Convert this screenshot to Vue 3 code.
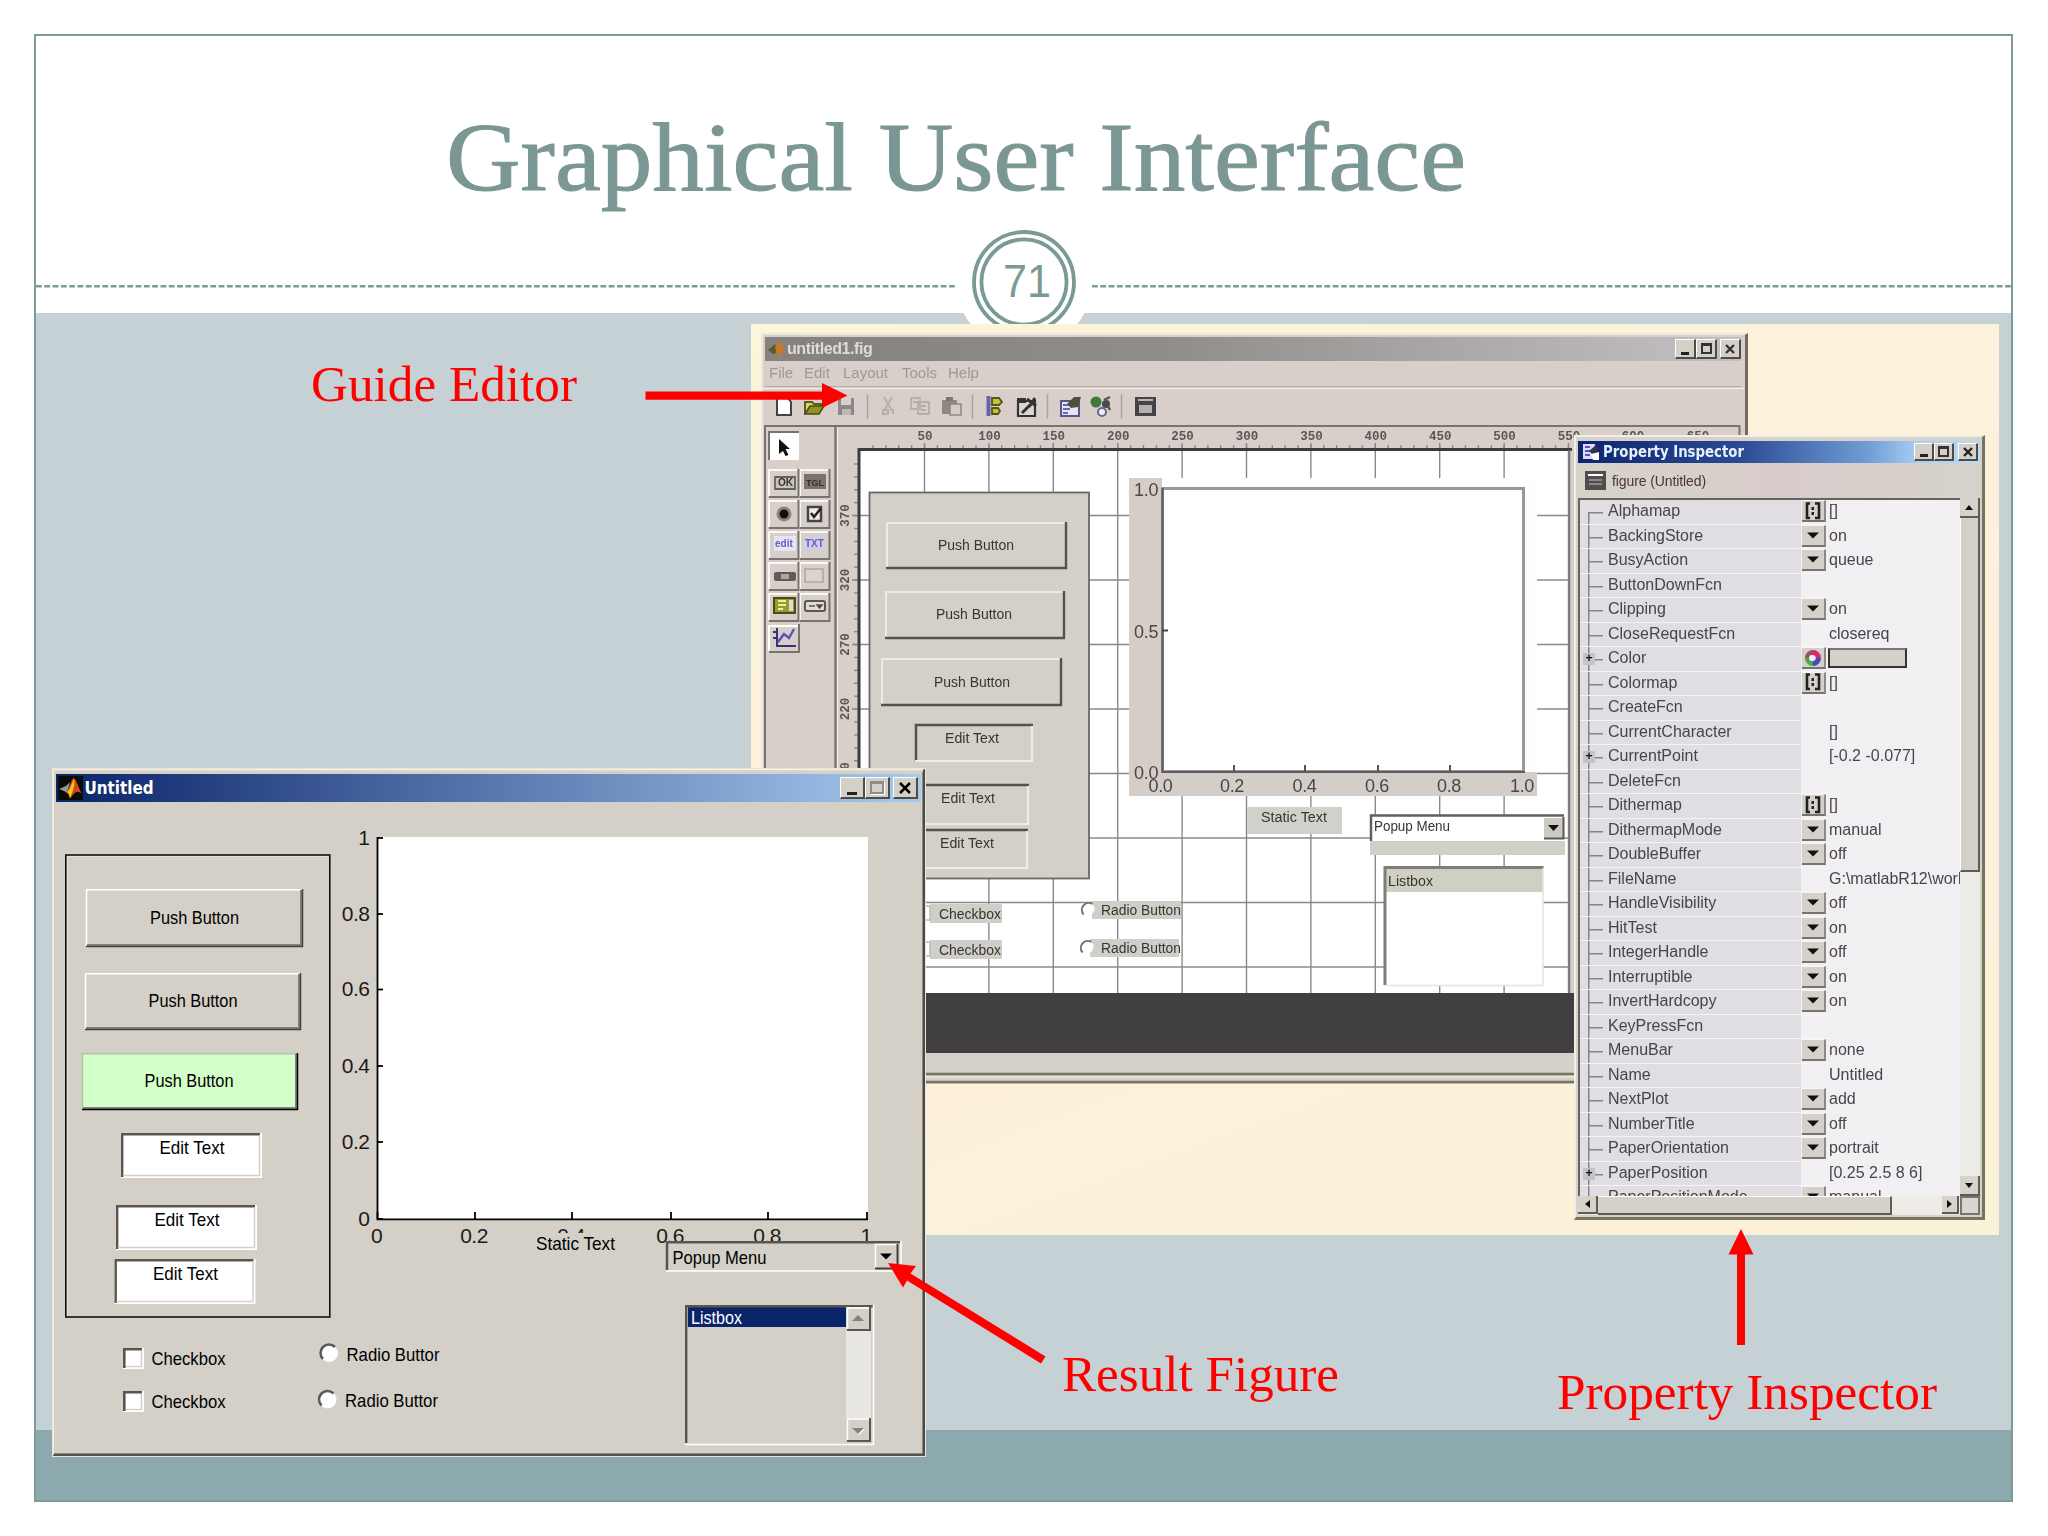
<script setup>
const menus = [
  { t: 'File', w: 35 }, { t: 'Edit', w: 39 }, { t: 'Layout', w: 59 }, { t: 'Tools', w: 46 }, { t: 'Help', w: 40 },
]

const rows = [
  ['Alphamap', 'm', '[]'], ['BackingStore', 'd', 'on'], ['BusyAction', 'd', 'queue'], ['ButtonDownFcn', '', ''],
  ['Clipping', 'd', 'on'], ['CloseRequestFcn', '', 'closereq'], ['Color', 'c', ''], ['Colormap', 'm', '[]'],
  ['CreateFcn', '', ''], ['CurrentCharacter', '', '[]'], ['CurrentPoint', '', '[-0.2 -0.077]'], ['DeleteFcn', '', ''],
  ['Dithermap', 'm', '[]'], ['DithermapMode', 'd', 'manual'], ['DoubleBuffer', 'd', 'off'],
  ['FileName', '', 'G:\\matlabR12\\work'], ['HandleVisibility', 'd', 'off'], ['HitTest', 'd', 'on'],
  ['IntegerHandle', 'd', 'off'], ['Interruptible', 'd', 'on'], ['InvertHardcopy', 'd', 'on'], ['KeyPressFcn', '', ''],
  ['MenuBar', 'd', 'none'], ['Name', '', 'Untitled'], ['NextPlot', 'd', 'add'], ['NumberTitle', 'd', 'off'],
  ['PaperOrientation', 'd', 'portrait'], ['PaperPosition', '', '[0.25 2.5 8 6]'], ['PaperPositionMode', 'd', 'manual'],
].map(([name, kind, value]) => ({ name, kind, value, plus: ['Color', 'CurrentPoint', 'PaperPosition'].includes(name) }))

/* layout editor, in slide coordinates */
const gridX = Array.from({ length: 11 }, (_, i) => ({ x: 924.5 + i * 64.4, label: 50 * (i + 1) }))
const gridY = ['370', '320', '270', '220', '170', '120', '70', '20'].map((label, i) => ({ y: 515.5 + i * 64.5, label }))
const ticksX = Array.from({ length: 55 }, (_, i) => 873 + i * 12.88)
const ticksY = Array.from({ length: 42 }, (_, i) => 464 + i * 12.9)
const guideButtons = [
  { x: 886, y: 522, w: 181, h: 47, tx: 938, ty: 549.5 },
  { x: 885, y: 591, w: 180, h: 48, tx: 936, ty: 619 },
  { x: 881, y: 658, w: 181, h: 48, tx: 934, ty: 687 },
]
const guideEdits = [
  { x: 915, y: 724, w: 118, h: 38, tx: 945, ty: 742.5 },
  { x: 911, y: 784, w: 118, h: 41, tx: 941, ty: 803 },
  { x: 910, y: 829, w: 118, h: 40, tx: 940, ty: 848 },
]
const guideTicks = [1160.5, 1232, 1304.5, 1377, 1449, 1522].map((x, i) => ({ x, label: (i * 0.2).toFixed(1) }))

/* running figure */
const figButtons = [
  { x: 86, y: 889, w: 217, h: 58, tx: 150, ty: 923.5, fill: '#d4d0c8' },
  { x: 85, y: 973, w: 216, h: 57, tx: 148.5, ty: 1007, fill: '#d4d0c8' },
  { x: 82, y: 1053, w: 216, h: 57, tx: 144.5, ty: 1087, fill: '#d3ffc8' },
]
const figEdits = [
  { x: 121, y: 1133, tx: 159.5, ty: 1153.5 },
  { x: 116, y: 1205, tx: 154.5, ty: 1226 },
  { x: 114.5, y: 1259, tx: 153, ty: 1280 },
]
const yAxis = [[838, '1'], [914, '0.8'], [989.5, '0.6'], [1066, '0.4'], [1142, '0.2'], [1219, '0']]
const xAxis = [[377.5, '0'], [475, '0.2'], [572, '0.4'], [671, '0.6'], [768, '0.8'], [867, '1']]
</script>

<template>
  <main class="slide">
    <section class="frame">
      <header class="head"></header>
      <div class="body"></div>
      <div class="foot"></div>
    </section>

    <svg class="layer" viewBox="0 0 2048 1536">
      <circle cx="1024" cy="282" r="68" fill="#fff" />
      <path d="M36 286.3H957M1092 286.3H2012" stroke="#7b9a95" stroke-width="2.4" stroke-dasharray="5.8 2.5" />
      <g fill="none" stroke="#7b9a95" stroke-width="3.8">
        <circle cx="1024" cy="282" r="50" /><circle cx="1024" cy="282" r="42.6" />
      </g>
      <text x="1003" y="297" class="num" textLength="48" lengthAdjust="spacingAndGlyphs">71</text>
      <text x="446" y="189.500" class="title" textLength="1020" lengthAdjust="spacingAndGlyphs">Graphical User Interface</text>
    </svg>

    <section class="backdrop">
      <section class="guide">
        <div class="g-title">
          <svg width="20" height="20" viewBox="0 0 20 20"><path d="M1 11L8 5L11 13L6 15Z" fill="#555c2c" /><path d="M8 8L13 1L19 16L15 13L11 19Z" fill="#c97828" /></svg>
          <span>untitled1.fig</span>
          <div class="ctl gctl"><i><b class="min"></b></i><i><b class="max"></b></i><i class="cl">
            <svg width="12" height="12"><path d="M2 2L10 10M10 2L2 10" stroke="#333" stroke-width="2.4" /></svg></i></div>
        </div>
        <nav class="g-menu"><span v-for="m in menus" :key="m.t" :style="{ width: m.w + 'px' }">{{ m.t }}</span></nav>
      </section>

      <svg class="canvas" viewBox="751 388 1000 696">
        <!-- toolbar -->
        <path d="M762 388.5H1744" stroke="#f5efe6" />
        <path d="M867.5 394V419M972.5 394V419M1047.500 394V419M1121.500 394V419" stroke="#aaa49d" stroke-width="1.5" />
        <path d="M777 397H787L791 402V415H777Z" fill="#fff" stroke="#444" stroke-width="2" />
        <path d="M805 414V402H812L814 404H821V407" fill="#d8d46a" stroke="#5b5b20" stroke-width="2" /><path d="M805 414L810 406H824L819 414Z" fill="#8f9428" stroke="#4a4a12" stroke-width="1.500" />
        <path d="M838 398H854V415H838Z" fill="#8c8789" /><path d="M841 398H851V405H841Z" fill="#d7d0cc" /><path d="M842 409H851V415H842Z" fill="#bdb7b5" />
        <path d="M884 397L891 409M892 397L885 409M883 410H888V414H883ZM890 410H893V414" fill="none" stroke="#b5aeab" stroke-width="2" />
        <path d="M911 398H920V409H911ZM918 402H929V414H918ZM913 402H918M921 406H926M921 410H926" fill="none" stroke="#b5aeab" stroke-width="1.800" />
        <path d="M942 400H957V414H942Z" fill="#8e8783" /><path d="M950 404H961V415H950Z" fill="#d4cdc6" stroke="#8e8783" stroke-width="1.500" /><path d="M946 397H953V401H946Z" fill="#777" />
        <path d="M988.5 396V416" stroke="#6860a8" stroke-width="4" /><path d="M992 398H999L1002 402L999 405H992ZM992 408H998L1000 411L998 414H992Z" fill="#c3c33a" stroke="#555518" stroke-width="1.8" />
        <path d="M1018 401H1035V416H1018Z" fill="#dcd6d0" stroke="#333" stroke-width="2.2" /><path d="M1017 398H1026V403H1017Z" fill="#333" /><path d="M1022 413L1030 405M1027 399L1036 406M1035 398L1029 407" stroke="#333" stroke-width="3" />
        <path d="M1061 401H1079V416H1061Z" fill="#e9e4f5" stroke="#5a548c" stroke-width="2" /><path d="M1063 405H1070M1063 409H1070M1063 413H1068" stroke="#6d65b5" stroke-width="2" /><path d="M1067 404L1074 397L1081 397L1078 407L1071 408Z" fill="#504f3c" />
        <circle cx="1096" cy="402" r="5.500" fill="#3f7a3c" /><circle cx="1106" cy="404" r="4" fill="#4a4850" /><circle cx="1102" cy="412" r="4" fill="#f0eef5" stroke="#6a648c" stroke-width="2" /><path d="M1104 400L1110 397M1108 406L1110 410" stroke="#555" stroke-width="2.500" />
        <path d="M1135 397H1156V416H1135Z" fill="#444" /><path d="M1138 400H1153" stroke="#ddd" stroke-width="1.5" /><path d="M1139 405H1152V413H1139Z" fill="#b4afac" />

        <!-- palette -->
        <path d="M765 1053V426H1740" fill="none" stroke="#77736d" stroke-width="2" />
        <path d="M835.5 426V1053" stroke="#77736d" stroke-width="2.4" /><path d="M837.5 427V1053" stroke="#f4f0ea" />
        <rect x="769" y="432" width="30" height="28" fill="#fff" /><path d="M769 460V432H799" fill="none" stroke="#77736d" stroke-width="2" />
        <path d="M779 439L790 449L785.500 449L788.500 455L785.500 456L783 451L779 454Z" fill="#111" />
        <g v-for="r in 5" :key="r" :transform="`translate(0 ${469 + (r - 1) * 31})`">
          <path v-for="c in 2" :key="c" :d="`M${738 + c * 31} 27V1H${766 + c * 31}`" fill="none" stroke="#faf8f4" stroke-width="2" />
          <path v-for="c in 2" :key="c + 5" :d="`M${738 + c * 31} 28H${767.5 + c * 31}V0`" fill="none" stroke="#77736d" stroke-width="2" />
        </g>
        <path d="M769 651V626H798" fill="none" stroke="#fff" stroke-width="2" /><path d="M769 652H799V624" fill="none" stroke="#77736d" stroke-width="2" />
        <path d="M775 477H795V489H775Z" fill="#c9c4bb" stroke="#66625c" stroke-width="1.8" /><text x="778" y="486" font-size="8" class="b">OK</text>
        <path d="M804 474H826V489H804Z" fill="#77736d" /><text x="806" y="486" font-size="10" class="b dark">TGL</text>
        <circle cx="784" cy="514" r="7.500" fill="#8a867f" /><circle cx="784" cy="514" r="4.500" fill="#111" />
        <path d="M808 507H821V521H808Z" fill="#eee" stroke="#444" stroke-width="2.500" /><path d="M811 513L814 517L821 508" fill="none" stroke="#222" stroke-width="2.500" />
        <path d="M774 536H796V551H774Z" fill="#e6e4fb" /><text x="775" y="547" class="b blue">edit</text>
        <path d="M804 537H825V550H804Z" fill="#cfcdeb" /><text x="805" y="547" class="b blue">TXT</text>
        <rect x="774" y="572" width="22" height="9" rx="2" fill="#5f5b57" /><rect x="781" y="574" width="8" height="5" fill="#aaa" />
        <rect x="805" y="569" width="18" height="13" fill="#d9d5ce" stroke="#aaa6a0" stroke-width="1.500" />
        <path d="M774 598H795V613H774Z" fill="#9a9c2e" stroke="#4b4b20" stroke-width="2" /><path d="M778 601H786M778 605H786M778 609H783" stroke="#eef09a" stroke-width="2" /><path d="M789 600H793V611H789Z" fill="#ddd" />
        <rect x="805" y="601" width="20" height="10" rx="2" fill="#e0dcd5" stroke="#5a5650" stroke-width="2" /><path d="M809 606H815M817 605H822L819.500 608Z" stroke="#555" stroke-width="1.500" />
        <path d="M777 628V646H796M773 632H777M773 638H777" fill="none" stroke="#333470" stroke-width="2" /><path d="M778 642L784 634L789 638L794 629" fill="none" stroke="#5552b8" stroke-width="2.400" />

        <!-- rulers and grid -->
        <rect x="859" y="450" width="712" height="543" fill="#fff" />
        <g stroke="#8a888c" stroke-width="1.400">
          <path v-for="g in gridX" :key="g.x" :d="`M${g.x} 443V993`" />
          <path v-for="g in gridY" :key="g.y" :d="`M852 ${g.y}H1570`" />
          <path v-for="t in ticksX" :key="t" :d="`M${t} 445V449`" />
          <path v-for="t in ticksY" :key="t" :d="`M854 ${t}H858`" />
        </g>
        <path d="M859 993V449.500H1572" fill="none" stroke="#3c3a3a" stroke-width="3" />
        <text v-for="g in gridX" :key="g.label" :x="g.x + 0.500" y="440" class="ruler" text-anchor="middle">{{ g.label }}</text>
        <text x="1633" y="440" class="ruler" text-anchor="middle">600</text><text x="1698" y="440" class="ruler" text-anchor="middle">650</text>
        <text v-for="g in gridY" :key="g.label" :transform="`translate(849 ${g.y}) rotate(-90)`" class="ruler" text-anchor="middle">{{ g.label }}</text>
        <path d="M1739.500 426V440" stroke="#77736d" stroke-width="2" />

        <!-- frame widget -->
        <rect x="869.5" y="492.500" width="219.500" height="386" fill="#d4d0c8" stroke="#6a6764" stroke-width="1.800" />
        <g v-for="b in guideButtons" :key="b.y">
          <path :d="`M${b.x + 1} ${b.y + b.h}V${b.y + 1}H${b.x + b.w}`" fill="none" stroke="#eeebe4" stroke-width="2" />
          <path :d="`M${b.x} ${b.y + b.h - 1}H${b.x + b.w - 1}V${b.y}`" fill="none" stroke="#55514e" stroke-width="2.400" />
          <text :x="b.tx" :y="b.ty" class="soft" textLength="76" lengthAdjust="spacingAndGlyphs">Push Button</text>
        </g>
        <g v-for="b in guideEdits" :key="b.y">
          <path :d="`M${b.x + 1} ${b.y + b.h}V${b.y + 1}H${b.x + b.w}`" fill="none" stroke="#55514d" stroke-width="2.500" />
          <path :d="`M${b.x} ${b.y + b.h - 1}H${b.x + b.w - 1}V${b.y + 2}`" fill="none" stroke="#efece6" stroke-width="2.200" />
          <text :x="b.tx" :y="b.ty" class="soft" textLength="54" lengthAdjust="spacingAndGlyphs">Edit Text</text>
        </g>

        <!-- axes widget -->
        <rect x="1129" y="478" width="408" height="318" fill="#fefefe" />
        <path d="M1129 478H1162V772H1537V796H1129Z" fill="#d5cec8" />
        <path d="M1162.500 488.500H1523.500V771.500H1162.500Z" fill="#fff" stroke="#9a9897" stroke-width="3" />
        <path d="M1162.500 488V772H1525" fill="none" stroke="#605d5c" stroke-width="2.200" />
        <path d="M1162 630.500H1168M1234 771V765M1305 771V765M1378 771V765M1450 771V765" stroke="#444" stroke-width="1.800" />
        <g class="axis">
          <text v-for="t in guideTicks" :key="t.x" :x="t.x" y="792" text-anchor="middle">{{ t.label }}</text>
          <text x="1134" y="779">0.0</text><text x="1134" y="638">0.5</text><text x="1134" y="495.500">1.0</text>
        </g>

        <rect x="1247" y="807" width="95" height="27" fill="#d0d1ca" />
        <text x="1261" y="822" class="soft" textLength="66" lengthAdjust="spacingAndGlyphs">Static Text</text>
        <rect x="1370" y="841" width="195" height="14" fill="#d0cfc8" />
        <rect x="1370" y="815" width="194" height="26" fill="#fff" /><path d="M1371 841V815.500H1564" fill="none" stroke="#625f5d" stroke-width="2.500" />
        <rect x="1544" y="818" width="20" height="21" fill="#ccc9c2" /><path d="M1544 838.500H1563.500V817" fill="none" stroke="#5a5754" stroke-width="2" />
        <path d="M1548 825H1559L1553.500 831Z" fill="#111" />
        <text x="1374" y="831" class="soft" textLength="76" lengthAdjust="spacingAndGlyphs">Popup Menu</text>
        <rect x="1384" y="866" width="159" height="120" fill="#fff" /><rect x="1386" y="869" width="157" height="23" fill="#d0cfc5" />
        <path d="M1385 985V867.500H1543.500" fill="none" stroke="#7f7c79" stroke-width="3" /><path d="M1386 985.500H1543V868" fill="none" stroke="#e6e4e2" stroke-width="1.500" />
        <text x="1388" y="886" class="soft" textLength="45" lengthAdjust="spacingAndGlyphs">Listbox</text>

        <g v-for="(y, i) in [904, 940]" :key="y">
          <rect x="930" :y="y" width="72" height="19" fill="#d0cec9" /><rect x="916" :y="y + 2" width="14" height="14" fill="#fff" stroke="#bbb" stroke-width="1.500" />
          <text x="939" :y="y + 15" class="soft" textLength="62" lengthAdjust="spacingAndGlyphs">Checkbox</text>
          <rect :x="1092 - i * 2" :y="y - 3 + i * 2" width="89" height="18" fill="#d0cec9" />
          <circle :cx="1088 - i" :cy="y + 5 + i * 2" r="6.500" fill="#fff" />
          <path :d="`M${1083.5 - i} ${y + 10.5 + i * 2}A7 7 0 0 1 ${1092.5 - i} ${y + i * 2}`" fill="none" stroke="#75726f" stroke-width="2" />
          <text x="1101" :y="y + 11 + i * 2" class="soft" textLength="80" lengthAdjust="spacingAndGlyphs">Radio Button</text>
        </g>
        <path d="M1569.500 450V993" stroke="#77757a" stroke-width="2" />

        <rect x="860" y="993" width="716" height="60" fill="#423f41" />
        <path d="M762 1053H1746V1084H762Z" fill="#d4d1ca" />
        <path d="M765 1074H1744M762 1082H1748" stroke="#77745f" stroke-width="2.600" /><path d="M765 1077H1744" stroke="#e6e3d6" stroke-width="2" />
      </svg>

      <section class="inspector">
        <div class="i-title">
          <svg width="18" height="18"><path d="M1 1H13V16H1Z" fill="#dcd9fa" /><path d="M3 4H8M3 8H8M3 12H8" stroke="#5a50c0" stroke-width="2" /><path d="M7 8L14 2L17 6L11 12Z" fill="#33314f" /><path d="M9 11L17 9V17H11Z" fill="#fff" /></svg>
          <svg class="cap" width="146" height="22"><text x="3" y="16" textLength="141" lengthAdjust="spacingAndGlyphs">Property Inspector</text></svg>
          <div class="ctl ictl"><i><b class="min"></b></i><i><b class="max"></b></i><i class="cl">
            <svg width="12" height="12"><path d="M2 2L10 10M10 2L2 10" stroke="#222" stroke-width="2.400" /></svg></i></div>
        </div>
        <div class="i-obj">
          <svg width="21" height="19"><path d="M0 0H21V19H0Z" fill="#504e4d" /><path d="M3 4H18" stroke="#fff" stroke-width="2" /><path d="M4 9H17M4 13H17" stroke="#8b8886" stroke-width="2" /></svg>
          <span>figure (Untitled)</span>
        </div>
        <div class="i-main">
          <div class="i-list">
            <div v-for="r in rows" :key="r.name" class="row">
              <div class="tree"><em v-if="r.plus">+</em></div>
              <div class="name">{{ r.name }}</div>
              <div class="btn">
                <i v-if="r.kind" :class="r.kind">
                  <svg v-if="r.kind === 'd'" width="12" height="7"><path d="M0 0.500H12L6 6.500Z" fill="#111" /></svg>
                  <svg v-else-if="r.kind === 'm'" width="18" height="18"><path d="M6 1.500H3V16H6M11 1.500H15V16H11" fill="none" stroke="#222" stroke-width="2.600" /><path d="M7.500 5H10V8H7.500ZM7.500 10H10V13H7.500Z" fill="#222" /></svg>
                  <svg v-else width="18" height="18"><g fill="none" stroke-width="5"><path d="M3.500 9A5.500 5.500 0 0 1 9 3.500" stroke="#a04a70" /><path d="M9 3.500A5.500 5.500 0 0 1 14.500 9" stroke="#d8286c" /><path d="M14.500 9A5.500 5.500 0 0 1 9 14.500" stroke="#3a50b8" /><path d="M9 14.500A5.500 5.500 0 0 1 3.500 9" stroke="#4aa848" /></g><circle cx="8" cy="9" r="3" fill="#eef" /></svg>
                </i>
              </div>
              <div class="val"><u v-if="r.kind === 'c'"></u><template v-else>{{ r.value }}</template></div>
            </div>
          </div>
          <div class="vbar">
            <i class="sb"><svg width="8" height="5"><path d="M0 5H8L4 0Z" fill="#111" /></svg></i>
            <i class="thumb"></i><span></span>
            <i class="sb"><svg width="8" height="5"><path d="M0 0H8L4 5Z" fill="#111" /></svg></i>
          </div>
        </div>
        <div class="hbar">
          <i class="sb"><svg width="5" height="8"><path d="M5 0V8L0 4Z" fill="#111" /></svg></i>
          <i class="hthumb"></i><span></span>
          <i class="sb r"><svg width="5" height="8"><path d="M0 0V8L5 4Z" fill="#111" /></svg></i><i class="corner"></i>
        </div>
      </section>
    </section>

    <section class="figure">
      <div class="f-title">
        <svg class="logo" width="25" height="24" viewBox="0 0 25 24"><path d="M0 0H25V24H0Z" fill="#0a0a08" /><path d="M1 13L8 10L12 6L9 17L6 15Z" fill="#8c9c98" /><path d="M8 16C12 12 13 3 16 2C19 5 21 13 24 18C20 14 17 15 12 23C11 18 10 18 8 16Z" fill="#cf4a12" /><path d="M16 3C17 8 16 13 12 22C11 19 11 17 9 16C13 13 14 6 16 3Z" fill="#f2c52c" /></svg>
        <svg width="74" height="26"><text x="1.500" y="19" class="ftxt" textLength="69" lengthAdjust="spacingAndGlyphs">Untitled</text></svg>
        <div class="ctl fctl"><i><b class="min"></b></i><i><b class="max off"></b></i><i class="cl">
          <svg width="14" height="12"><path d="M2 1L12 11M12 1L2 11" stroke="#000" stroke-width="2.500" /></svg></i></div>
      </div>
      <svg class="f-body" viewBox="56 802 866 652">
        <rect x="65.800" y="855" width="264" height="462" fill="none" stroke="#14120f" stroke-width="1.600" />
        <path d="M67.500 1316V856.500H329" fill="none" stroke="#e4e1da" />
        <g v-for="b in figButtons" :key="b.y">
          <rect :x="b.x" :y="b.y" :width="b.w" :height="b.h" :fill="b.fill" />
          <path :d="`M${b.x + 0.500} ${b.y + b.h}V${b.y + 0.700}H${b.x + b.w}`" fill="none" :stroke="b.fill === '#d3ffc8' ? '#b2c4a8' : '#fff'" stroke-width="1.500" />
          <path :d="`M${b.x + 1} ${b.y + b.h - 2}H${b.x + b.w - 2}V${b.y + 1}`" fill="none" stroke="#85827c" stroke-width="2" />
          <path :d="`M${b.x} ${b.y + b.h - 0.500}H${b.x + b.w - 0.500}V${b.y}`" fill="none" :stroke="b.fill === '#d3ffc8' ? '#000' : '#45423e'" stroke-width="1.500" />
          <text :x="b.tx" :y="b.ty" textLength="89" lengthAdjust="spacingAndGlyphs">Push Button</text>
        </g>
        <g v-for="e in figEdits" :key="e.y">
          <rect :x="e.x" :y="e.y" width="141" height="45" fill="#fff" />
          <path :d="`M${e.x + 1.200} ${e.y + 44}V${e.y + 1.200}H${e.x + 139}`" fill="none" stroke="#595651" stroke-width="2.400" />
          <path :d="`M${e.x + 2} ${e.y + 42.500}H${e.x + 138.500}V${e.y + 2}`" fill="none" stroke="#d4d0c8" stroke-width="1.500" />
          <text :x="e.tx" :y="e.ty" textLength="65" lengthAdjust="spacingAndGlyphs">Edit Text</text>
        </g>
        <g v-for="(y, i) in [1348, 1391]" :key="y">
          <rect x="123" :y="y" width="21" height="21" fill="#fff" /><path :d="`M124.300 ${y + 20}V${y + 1.300}H142`" fill="none" stroke="#595651" stroke-width="2.600" />
          <path :d="`M126 ${y + 18.500}H141.500V${y + 3}`" fill="none" stroke="#d4d0c8" stroke-width="1.500" />
          <text x="151.500" :y="y + 17" textLength="74" lengthAdjust="spacingAndGlyphs">Checkbox</text>
          <circle :cx="329 - i * 1.500" :cy="1353 + i * 46.500" r="9" fill="#fff" />
          <path :d="`M${323 - i * 1.500} ${1359 + i * 46.500}A8 8 0 0 1 ${335 - i * 1.500} ${1347 + i * 46.500}`" fill="none" stroke="#5c5954" stroke-width="2.500" />
          <text :x="346.500 - i * 1.500" :y="1360.500 + i * 46.500" textLength="93" lengthAdjust="spacingAndGlyphs">Radio Buttor</text>
        </g>
        <rect x="377" y="837" width="491" height="382" fill="#fff" />
        <path d="M377.500 837V1219.300H868" fill="none" stroke="#000" stroke-width="1.800" />
        <g v-for="a in yAxis" :key="a[0]">
          <path :d="`M377 ${a[0]}H383`" stroke="#000" stroke-width="1.800" />
          <text :x="369.500" :y="a[0] + 6.800" class="ax" text-anchor="end">{{ a[1] }}</text>
        </g>
        <g v-for="a in xAxis" :key="a[0]">
          <path :d="`M${a[0]} 1219V1212`" stroke="#000" stroke-width="1.800" />
          <text :x="a[0] - 1" y="1243" class="ax" text-anchor="middle">{{ a[1] }}</text>
        </g>
        <rect x="530" y="1233" width="92" height="24" fill="#d4d0c8" />
        <text x="536" y="1249.500" textLength="79" lengthAdjust="spacingAndGlyphs">Static Text</text>
        <rect x="666" y="1241" width="235" height="30" fill="#d4d0c8" />
        <path d="M667 1270V1242.200H900" fill="none" stroke="#595651" stroke-width="2.500" /><path d="M666 1271H901V1241" fill="none" stroke="#fff" stroke-width="1.500" />
        <text x="672.500" y="1263.500" textLength="94" lengthAdjust="spacingAndGlyphs">Popup Menu</text>
        <path d="M875.500 1269V1244.500H898" fill="none" stroke="#fff" stroke-width="1.500" /><path d="M875 1268.500H897.500V1244" fill="none" stroke="#45423e" stroke-width="2" />
        <path d="M880 1253.500H892L886 1259.500Z" fill="#000" />
        <rect x="685" y="1305" width="189" height="140" fill="#d4d0c8" />
        <rect x="688" y="1307" width="158" height="20" fill="#0a246a" />
        <path d="M686.200 1443V1306.200H873" fill="none" stroke="#595651" stroke-width="2.400" /><path d="M685 1444.500H873.500V1305" fill="none" stroke="#fff" stroke-width="1.500" />
        <text x="691" y="1323.500" class="sel" textLength="51" lengthAdjust="spacingAndGlyphs">Listbox</text>
        <rect x="846" y="1307" width="25" height="135" fill="#e9e7e3" />
        <g v-for="y in [1307, 1418]" :key="y">
          <rect x="846" :y="y" width="25" height="24" fill="#d4d0c8" />
          <path :d="`M847.500 ${y + 22}V${y + 1}H870`" fill="none" stroke="#fff" stroke-width="1.500" /><path :d="`M847 ${y + 23}H870V${y}`" fill="none" stroke="#5a5752" stroke-width="2" />
        </g>
        <path d="M852 1321H864L858 1315Z" fill="#85827c" /><path d="M853 1429H865L859 1435Z" fill="#fff" /><path d="M852 1428H864L858 1434Z" fill="#85827c" />
      </svg>
    </section>

    <svg class="layer" viewBox="0 0 2048 1536">
      <g fill="#f00">
        <path d="M645.500 391.500H822V383L847.500 395.500L822 408V399.800H645.500Z" />
        <path d="M1737 1345V1254.500H1728.500L1741 1229L1753.500 1254.500H1745V1345Z" />
        <path d="M888 1263L916 1266L910.500 1273.500L1045.500 1356.500L1041 1363.500L907 1280.500L903 1287.500Z" />
      </g>
      <g class="note">
        <text x="311" y="401" textLength="266" lengthAdjust="spacingAndGlyphs">Guide Editor</text>
        <text x="1062" y="1391" textLength="277" lengthAdjust="spacingAndGlyphs">Result Figure</text>
        <text x="1557" y="1409" textLength="380" lengthAdjust="spacingAndGlyphs">Property Inspector</text>
      </g>
    </svg>
  </main>
</template>

<style>
body { margin: 0; background: #fff; }
</style>

<style scoped>
.slide { position: relative; width: 2048px; height: 1536px; overflow: hidden; background: #fff; padding: 34px 35px 34px 34px; box-sizing: border-box; font-family: "Liberation Sans", Arial, sans-serif; }
.frame { height: 1468px; box-sizing: border-box; border: 2px solid #7d9c97; display: flex; flex-direction: column; }
.head { height: 276.500px; }
.body { flex: 1; background: #c5d1d5; }
.foot { height: 70px; background: #8caaad; }
.layer { position: absolute; left: 0; top: 0; width: 2048px; height: 1536px; }
.title { font: 97px "Liberation Serif", serif; fill: #7b9794; stroke: #7b9794; stroke-width: 1px; }
.num { font-size: 46px; fill: #7b9a95; }
.note { font: 50px "Liberation Serif", "Times New Roman", serif; fill: #f00; }

.backdrop { position: absolute; left: 751px; top: 324px; width: 1248px; height: 911px; background: linear-gradient(160deg, #fbf5da, #fdf0dc 50%, #faf2d8); }
.guide { position: absolute; left: 10px; top: 9px; width: 987px; height: 748px; background: #d8cfcb; border: 2px solid #efe6dc; border-right: 3px solid #6f6b62; box-sizing: border-box; padding: 2px 4px 0 2px; filter: blur(0.400px); }
.g-title { height: 24px; background: linear-gradient(90deg, #84817f, #8f8c89 40%, #b9b7ba 88%, #c2c0c3); display: flex; align-items: center; padding-left: 2px; font-size: 16px; color: #dedbd8; font-weight: bold; letter-spacing: -0.400px; }
.g-menu { height: 26px; display: flex; align-items: center; padding: 0 0 2px 4px; box-sizing: border-box; border-bottom: 1px solid #b5ada9; font-size: 15px; color: #a09794; }
.canvas { position: absolute; left: 0; top: 64px; width: 1000px; height: 696px; filter: blur(0.400px); }
.canvas text { fill: #333; font-size: 16px; }
.canvas .b { font-weight: bold; font-size: 10px; }
.canvas .dark { fill: #33302e; font-size: 9px; }
.canvas .blue { fill: #6660b0; }
.canvas .soft { font-size: 15.500px; fill: #38352f; }
.canvas .ruler { font: bold 12.500px "Liberation Mono", monospace; fill: #5a5653; }
.canvas .axis text { font-size: 18px; fill: #4a4644; letter-spacing: -0.300px; }

.ctl { margin-left: auto; display: flex; }
.ctl i { display: flex; box-sizing: border-box; align-items: center; justify-content: center; background: #d4d0c8; border: 1.500px solid #fff; border-right: 2px solid #4f4c48; border-bottom: 2px solid #4f4c48; }
.ctl .min { width: 8px; height: 3px; background: #222; align-self: flex-end; margin-bottom: 2px; }
.ctl .max { width: 11px; height: 11px; box-sizing: border-box; border: 2px solid #333; border-top-width: 3px; }
.ctl .max.off { width: 14px; height: 13px; border-color: #908d87; box-shadow: 1px 1px #fff; }
.gctl { margin-right: 0; }
.gctl i { width: 21px; height: 20px; }
.gctl .cl { margin-left: 3px; }
.ictl { margin-right: 2px; }
.ictl i { width: 20px; height: 18px; }
.ictl .cl { margin-left: 4px; }
.fctl { margin-right: 3px; }
.fctl i { width: 25px; height: 22px; }
.fctl .cl { margin-left: 3px; }
.fctl .min { width: 10px; }

.inspector { position: absolute; left: 823px; top: 111px; width: 411px; height: 785px; box-sizing: border-box; background: #d6d2cb; border: 2px solid #f1eee6; border-right: 3px solid #76735f; border-bottom: 3px solid #76735f; padding: 4px 2px 0 2px; display: flex; flex-direction: column; filter: blur(0.400px); }
.i-title { height: 22px; flex: none; display: flex; align-items: center; padding-left: 4px; background: linear-gradient(90deg, #0c2470, #2a4a94 40%, #6f9cd4 72%, #a8d0f4 85%, #b8dcf4); }
.cap text { font: bold 15px "DejaVu Sans", sans-serif; fill: #e6f0fc; }
.i-obj { height: 35px; flex: none; display: flex; align-items: center; padding-left: 7px; gap: 6px; background: linear-gradient(90deg, #d5d3ca, #d8ccca 50%, #d6d2cb); font-size: 14px; color: #4b3438; letter-spacing: -0.100px; }
.i-main { height: 698px; flex: none; display: flex; }
.i-list { width: 382px; flex: none; overflow: hidden; border-top: 2px solid #66635f; border-left: 2px solid #66635f; box-sizing: border-box; background: #f0eef1; }
.row { height: 24.500px; display: flex; box-sizing: border-box; border-bottom: 1.500px solid #f4f2f5; font-size: 16px; line-height: 22.500px; color: #47444a; white-space: nowrap; }
.tree { width: 28px; flex: none; position: relative; background: linear-gradient(#85828a, #85828a) 8px 0 / 1.500px 100% no-repeat, linear-gradient(#85828a, #85828a) 8px 12px / 15px 1.500px no-repeat, #e0dee2; }
.row:first-child .tree { background-position: 8px 12px, 8px 12px, 0 0; }
.tree em { position: absolute; left: 3px; top: 6px; width: 12px; height: 12px; background: #c6c3c6; font: bold 12px/11px "Liberation Sans", sans-serif; text-align: center; color: #111; }
.name { width: 193px; flex: none; background: #e0dee2; }
.btn { width: 27px; flex: none; background: #f2f0f3; }
.btn i { display: flex; align-items: center; justify-content: center; width: 24px; height: 22px; margin-left: 1px; box-sizing: border-box; background: #d4d1cb; border-right: 2.500px solid #8d8a85; border-bottom: 2.500px solid #77746f; border-top: 1px solid #f8f6f2; }
.val { flex: 1; overflow: hidden; background: #f1eff2; padding-left: 1px; }
.val u { display: block; width: 79px; height: 20px; margin: 1px 0 0 -1px; box-sizing: border-box; background: #d3d1ca; border: 2px solid #333; border-top-color: #777; }
.vbar { width: 20px; flex: none; display: flex; flex-direction: column; background: #ecede9; }
.vbar span, .hbar span { flex: 1; }
.sb { display: flex; align-items: center; justify-content: center; box-sizing: border-box; width: 20px; height: 20px; background: #d6d3cb; border-right: 2px solid #5f5c55; border-bottom: 2px solid #5f5c55; }
.thumb { width: 20px; height: 354px; box-sizing: border-box; background: #d3d0c8; border-right: 2px solid #5f5c55; border-bottom: 2px solid #5f5c55; border-left: 1px solid #fff; }
.hbar { height: 19px; flex: none; display: flex; background: #eeece7; }
.hbar .sb { height: 18px; }
.hbar .r { width: 17px; margin-right: 1px; }
.hthumb { width: 294px; height: 19px; box-sizing: border-box; background: #d5d1c9; border-right: 2.500px solid #5f5c55; border-bottom: 2.500px solid #5f5c55; border-top: 1px solid #fff; }
.corner { width: 20px; height: 19px; box-sizing: border-box; border: 2px solid #77746f; background: #d8d6d0; }

.figure { position: absolute; left: 52px; top: 768px; width: 874px; height: 689px; box-sizing: border-box; background: #d4d0c8; border: 2px solid #f4eee4; border-right: 3px solid #4d4b47; border-bottom: 3px solid #55534e; padding: 4px 2px 0; box-shadow: inset 0 2px #dcd5cb, inset -1px -1px #8a877f; outline: 1px solid #e9e4da; outline-offset: -1px; }
.f-title { height: 28px; display: flex; align-items: center; padding-left: 2px; background: linear-gradient(90deg, #0a246a, #a6caf0); }
.logo { flex: none; }
.ftxt { font: bold 18px "DejaVu Sans", sans-serif; fill: #fff; }
.f-body { display: block; width: 866px; height: 652px; }
.f-body text { font-size: 18.500px; }
.f-body .sel { fill: #fff; }
.f-body .ax { font-size: 21px; letter-spacing: -0.500px; fill: #1c1a18; }
</style>
